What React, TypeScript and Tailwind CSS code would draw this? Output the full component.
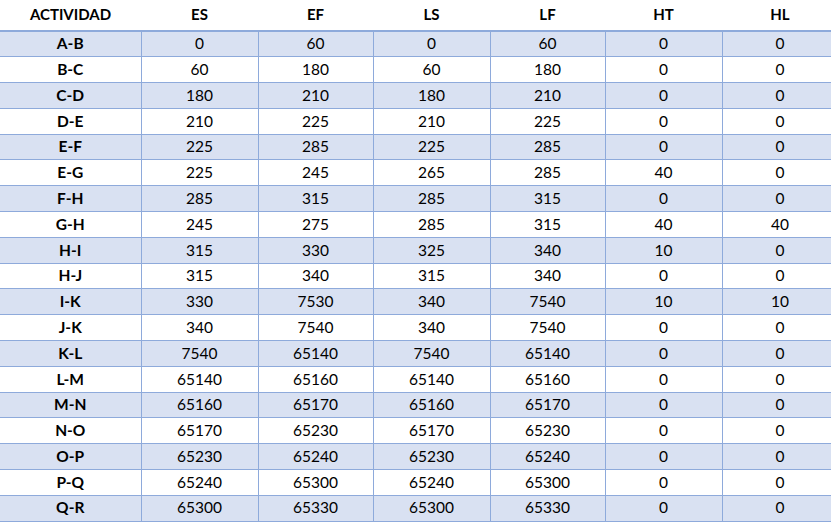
import React from 'react';

type Row = [string, number, number, number, number, number, number];

const rows: Row[] = [
  ['A-B', 0, 60, 0, 60, 0, 0],
  ['B-C', 60, 180, 60, 180, 0, 0],
  ['C-D', 180, 210, 180, 210, 0, 0],
  ['D-E', 210, 225, 210, 225, 0, 0],
  ['E-F', 225, 285, 225, 285, 0, 0],
  ['E-G', 225, 245, 265, 285, 40, 0],
  ['F-H', 285, 315, 285, 315, 0, 0],
  ['G-H', 245, 275, 285, 315, 40, 40],
  ['H-I', 315, 330, 325, 340, 10, 0],
  ['H-J', 315, 340, 315, 340, 0, 0],
  ['I-K', 330, 7530, 340, 7540, 10, 10],
  ['J-K', 340, 7540, 340, 7540, 0, 0],
  ['K-L', 7540, 65140, 7540, 65140, 0, 0],
  ['L-M', 65140, 65160, 65140, 65160, 0, 0],
  ['M-N', 65160, 65170, 65160, 65170, 0, 0],
  ['N-O', 65170, 65230, 65170, 65230, 0, 0],
  ['O-P', 65230, 65240, 65230, 65240, 0, 0],
  ['P-Q', 65240, 65300, 65240, 65300, 0, 0],
  ['Q-R', 65300, 65330, 65300, 65330, 0, 0],
];

const headers = ['ACTIVIDAD', 'ES', 'EF', 'LS', 'LF', 'HT', 'HL'];

export default function App() {
  return (
    <div className="w-[831px] h-[523px] overflow-hidden bg-white font-['Lato','Liberation_Sans',sans-serif] text-[15.5px] leading-none text-black">
      <table className="w-[838px] border-collapse table-fixed">
        <colgroup>
          <col className="w-[141px]" />
          <col className="w-[117px]" />
          <col className="w-[115px]" />
          <col className="w-[117px]" />
          <col className="w-[115px]" />
          <col className="w-[117px]" />
          <col className="w-[116px]" />
        </colgroup>
        <thead>
          <tr className="h-[31px]">
            {headers.map((h) => (
              <th key={h} className="p-0 text-center font-bold text-[15px] border-b-[2px] border-[#8eaadb] align-middle pb-[2px]">
                {h}
              </th>
            ))}
          </tr>
        </thead>
        <tbody>
          {rows.map((r, i) => (
            <tr key={r[0]} className={`h-[25.8px] ${i % 2 === 0 ? 'bg-[#d9e1f2]' : 'bg-white'}`}>
              {r.map((c, j) => (
                <td
                  key={j}
                  className={`p-0 text-center align-middle border border-[#8eaadb] border-t-0 first:border-l-0 ${j === 0 ? 'font-bold' : ''}`}
                >
                  {c}
                </td>
              ))}
            </tr>
          ))}
        </tbody>
      </table>
    </div>
  );
}
